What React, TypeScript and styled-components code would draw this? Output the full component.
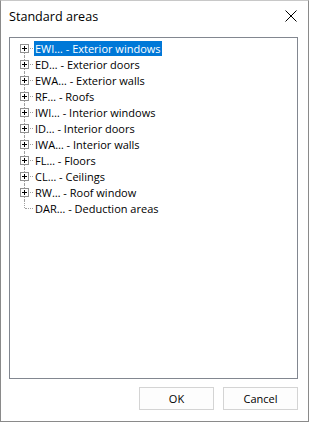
import React from "react";
import styled, { createGlobalStyle } from "styled-components";

const Global = createGlobalStyle`
  html, body { margin: 0; padding: 0; background: #ffffff; }
  body { font-family: "Open Sans", "Liberation Sans", sans-serif; }
`;

const Window = styled.div`
  box-sizing: border-box;
  width: 309px;
  height: 422px;
  background: #ffffff;
  border: 1px solid #8a8a8a;
  border-top-color: #c8c8c8;
  display: flex;
  flex-direction: column;
`;

const TitleBar = styled.div`
  height: 30px;
  display: flex;
  align-items: center;
  justify-content: space-between;
  padding: 0 8px 0 8px;
  flex: none;
`;

const Title = styled.div`
  font-family: "Open Sans", "Liberation Sans", sans-serif;
  font-size: 12.6px;
  color: #000000;
`;

const CloseButton = styled.div`
  width: 14px;
  height: 14px;
  display: flex;
  align-items: center;
  justify-content: center;
  margin-right: 2px;
`;

const Body = styled.div`
  flex: 1;
  display: flex;
  flex-direction: column;
  padding: 6px 10px 10px 8px;
  gap: 8px;
`;

const TreeBox = styled.div`
  box-sizing: border-box;
  height: 342px;
  border: 1px solid #828790;
  background: #ffffff;
  padding: 2px 0 0 8px;
`;

const Row = styled.div`
  height: 16px;
  display: flex;
  align-items: center;
`;

const Connector = styled.div<{ $first?: boolean; $last?: boolean }>`
  width: 15px;
  height: 16px;
  position: relative;
  flex: none;
  &::before {
    content: "";
    position: absolute;
    left: 6px;
    top: ${(p) => (p.$first ? "8px" : "0")};
    height: ${(p) => (p.$last ? "8px" : p.$first ? "8px" : "16px")};
    border-left: 1px dotted #a0a0a0;
  }
  &::after {
    content: "";
    position: absolute;
    left: 7px;
    top: 8px;
    width: 8px;
    border-top: 1px dotted #a0a0a0;
  }
`;

const PlusBox = styled.div`
  position: absolute;
  left: 2px;
  top: 4px;
  width: 7px;
  height: 7px;
  border: 1px solid #919191;
  background: #ffffff;
  z-index: 1;
  display: flex;
  align-items: center;
  justify-content: center;
`;

const Label = styled.span<{ $selected?: boolean }>`
  font-family: "Open Sans", "Liberation Sans", sans-serif;
  font-size: 11px;
  line-height: 15px;
  height: 15px;
  padding: 0 1px;
  margin-left: 1px;
  white-space: pre;
  color: ${(p) => (p.$selected ? "#ffffff" : "#000000")};
  background: ${(p) => (p.$selected ? "#0078d7" : "transparent")};
`;

const Footer = styled.div`
  display: flex;
  justify-content: flex-end;
  gap: 9px;
`;

const Button = styled.button`
  box-sizing: border-box;
  width: 75px;
  height: 23px;
  border: 1px solid #d4d4d4;
  background: #fdfdfd;
  font-family: "Open Sans", "Liberation Sans", sans-serif;
  font-size: 11px;
  color: #000000;
  padding: 0;
`;

const items = [
  { code: "EWI", name: "Exterior windows", plus: true, selected: true },
  { code: "ED", name: "Exterior doors", plus: true },
  { code: "EWA", name: "Exterior walls", plus: true },
  { code: "RF", name: "Roofs", plus: true },
  { code: "IWI", name: "Interior windows", plus: true },
  { code: "ID", name: "Interior doors", plus: true },
  { code: "IWA", name: "Interior walls", plus: true },
  { code: "FL", name: "Floors", plus: true },
  { code: "CL", name: "Ceilings", plus: true },
  { code: "RW", name: "Roof window", plus: true },
  { code: "DAR", name: "Deduction areas", plus: false },
];

const PlusIcon = () => (
  <svg width="7" height="7" viewBox="0 0 7 7">
    <path d="M1 3.5H6M3.5 1V6" stroke="#000" strokeWidth="1" shapeRendering="crispEdges" />
  </svg>
);

export default function App() {
  return (
    <>
      <Global />
      <Window>
        <TitleBar>
          <Title>Standard areas</Title>
          <CloseButton>
            <svg width="12" height="12" viewBox="0 0 12 12">
              <path d="M0.5 0.5L11.5 11.5M11.5 0.5L0.5 11.5" stroke="#000" strokeWidth="1" />
            </svg>
          </CloseButton>
        </TitleBar>
        <Body>
          <TreeBox>
            {items.map((it, i) => (
              <Row key={it.code}>
                <Connector $first={i === 0} $last={i === items.length - 1}>
                  {it.plus && (
                    <PlusBox>
                      <PlusIcon />
                    </PlusBox>
                  )}
                </Connector>
                <Label $selected={it.selected}>{`${it.code}\u2026 - ${it.name}`}</Label>
              </Row>
            ))}
          </TreeBox>
          <Footer>
            <Button>OK</Button>
            <Button>Cancel</Button>
          </Footer>
        </Body>
      </Window>
    </>
  );
}
